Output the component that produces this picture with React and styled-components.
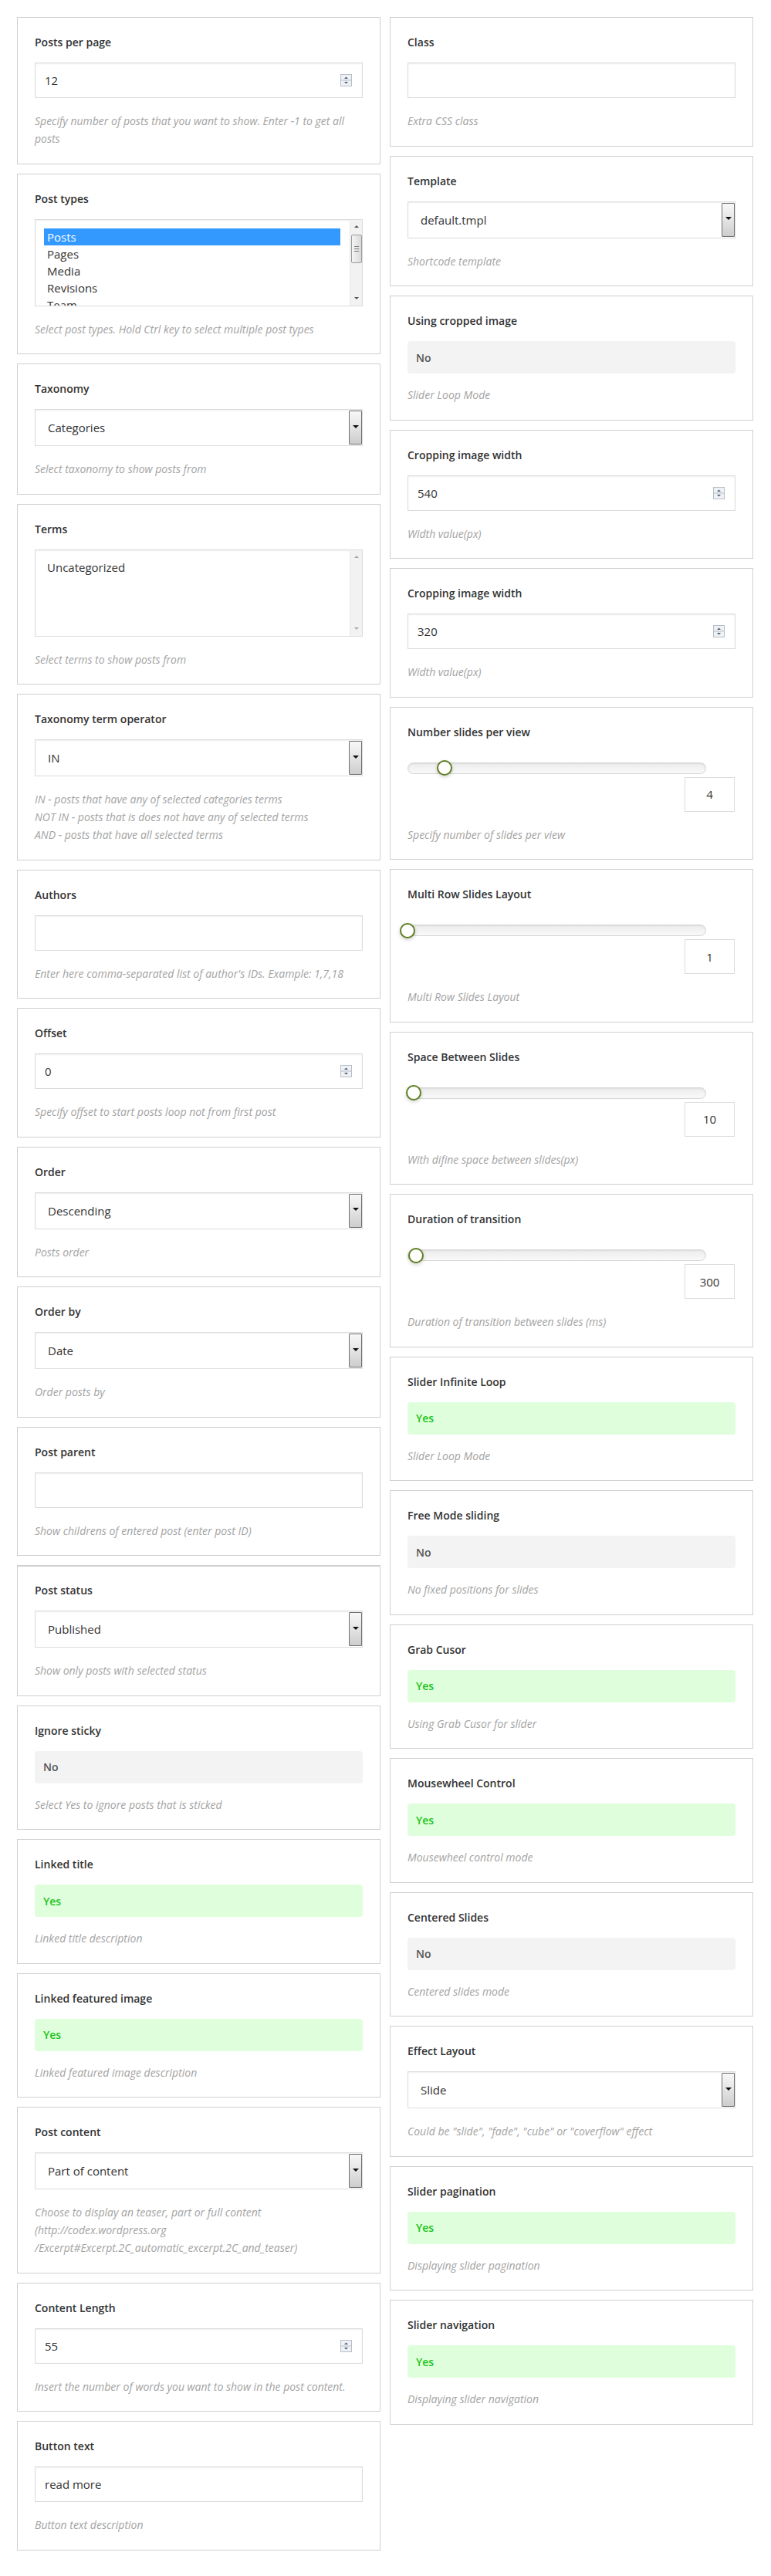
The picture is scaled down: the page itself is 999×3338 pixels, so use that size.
import React from "react";
import styled, { createGlobalStyle } from "styled-components";

const GlobalStyle = createGlobalStyle`
  html, body {
    margin: 0;
    padding: 0;
    background: #ffffff;
  }
  body {
    font-family: "Open Sans", "Liberation Sans", Arial, sans-serif;
    color: #333333;
  }
  * {
    box-sizing: border-box;
  }
`;

// left column settings
const leftFields = [
  {
    label: "Posts per page",
    type: "number",
    value: "12",
    desc: ["Specify number of posts that you want to show. Enter -1 to get all", "posts"],
  },
  {
    label: "Post types",
    type: "list",
    items: ["Posts", "Pages", "Media", "Revisions", "Team"],
    selected: 0,
    thumb: true,
    desc: "Select post types. Hold Ctrl key to select multiple post types",
  },
  { label: "Taxonomy", type: "select", value: "Categories", desc: "Select taxonomy to show posts from" },
  { label: "Terms", type: "list", items: ["Uncategorized"], selected: -1, desc: "Select terms to show posts from" },
  {
    label: "Taxonomy term operator",
    type: "select",
    value: "IN",
    desc: [
      "IN - posts that have any of selected categories terms",
      "NOT IN - posts that is does not have any of selected terms",
      "AND - posts that have all selected terms",
    ],
  },
  { label: "Authors", type: "text", value: "", desc: "Enter here comma-separated list of author's IDs. Example: 1,7,18" },
  { label: "Offset", type: "number", value: "0", desc: "Specify offset to start posts loop not from first post" },
  { label: "Order", type: "select", value: "Descending", desc: "Posts order" },
  { label: "Order by", type: "select", value: "Date", desc: "Order posts by" },
  { label: "Post parent", type: "text", value: "", desc: "Show childrens of entered post (enter post ID)" },
  { label: "Post status", type: "select", value: "Published", desc: "Show only posts with selected status", heavyTop: true },
  { label: "Ignore sticky", type: "toggle", on: false, desc: "Select Yes to ignore posts that is sticked" },
  { label: "Linked title", type: "toggle", on: true, desc: "Linked title description" },
  { label: "Linked featured image", type: "toggle", on: true, desc: "Linked featured image description" },
  {
    label: "Post content",
    type: "select",
    value: "Part of content",
    desc: [
      "Choose to display an teaser, part or full content",
      "(http://codex.wordpress.org",
      "/Excerpt#Excerpt.2C_automatic_excerpt.2C_and_teaser)",
    ],
  },
  { label: "Content Length", type: "number", value: "55", desc: "Insert the number of words you want to show in the post content." },
  { label: "Button text", type: "text", value: "read more", desc: "Button text description" },
];

// right column settings
const rightFields = [
  { label: "Class", type: "text", value: "", desc: "Extra CSS class" },
  { label: "Template", type: "select", value: "default.tmpl", desc: "Shortcode template" },
  { label: "Using cropped image", type: "toggle", on: false, desc: "Slider Loop Mode" },
  { label: "Cropping image width", type: "number", value: "540", desc: "Width value(px)" },
  { label: "Cropping image width", type: "number", value: "320", desc: "Width value(px)" },
  { label: "Number slides per view", type: "slider", value: "4", offset: 47.7, desc: "Specify number of slides per view" },
  { label: "Multi Row Slides Layout", type: "slider", value: "1", offset: 0, desc: "Multi Row Slides Layout" },
  { label: "Space Between Slides", type: "slider", value: "10", offset: 7.7, desc: "With difine space between slides(px)" },
  { label: "Duration of transition", type: "slider", value: "300", offset: 11.3, desc: "Duration of transition between slides (ms)" },
  { label: "Slider Infinite Loop", type: "toggle", on: true, desc: "Slider Loop Mode" },
  { label: "Free Mode sliding", type: "toggle", on: false, desc: "No fixed positions for slides" },
  { label: "Grab Cusor", type: "toggle", on: true, desc: "Using Grab Cusor for slider" },
  { label: "Mousewheel Control", type: "toggle", on: true, desc: "Mousewheel control mode" },
  { label: "Centered Slides", type: "toggle", on: false, desc: "Centered slides mode" },
  { label: "Effect Layout", type: "select", value: "Slide", desc: 'Could be "slide", "fade", "cube" or "coverflow" effect' },
  { label: "Slider pagination", type: "toggle", on: true, desc: "Displaying slider pagination" },
  { label: "Slider navigation", type: "toggle", on: true, desc: "Displaying slider navigation" },
];

function Spinner() {
  return (
    <svg width="15" height="16" viewBox="0 0 15 16">
      <rect x="0.5" y="0.5" width="14" height="15" fill="#eef1f5" stroke="#b9bec6" />
      <line x1="0.5" y1="8" x2="14.5" y2="8" stroke="#b9bec6" />
      <path d="M5 6 L7.5 3.5 L10 6 Z" fill="#4d5c73" />
      <path d="M5 10 L7.5 12.5 L10 10 Z" fill="#4d5c73" />
    </svg>
  );
}

function ListControl({ field }) {
  return (
    <ListBox>
      <Options>
        {field.items.map((item, i) => (
          <Option key={item} $selected={i === field.selected}>
            {item}
          </Option>
        ))}
      </Options>
      <ScrollTrack>
        <ScrollArrow $dir="up" $active={field.thumb} />
        {field.thumb && (
          <ScrollThumb>
            <Grip />
            <Grip />
            <Grip />
          </ScrollThumb>
        )}
        <ScrollSpacer />
        <ScrollArrow $dir="down" $active={field.thumb} />
      </ScrollTrack>
    </ListBox>
  );
}

function Control({ field }) {
  switch (field.type) {
    case "number":
      return (
        <Field>
          <FieldText>{field.value}</FieldText>
          <SpinWrap>
            <Spinner />
          </SpinWrap>
        </Field>
      );
    case "select":
      return (
        <Field $select>
          <FieldText>{field.value}</FieldText>
          <DropButton>
            <Caret />
          </DropButton>
        </Field>
      );
    case "list":
      return <ListControl field={field} />;
    case "toggle":
      return <Toggle $on={field.on}>{field.on ? "Yes" : "No"}</Toggle>;
    case "slider":
      return (
        <SliderArea>
          <Track>
            <Thumb style={{ left: `${field.offset - 1}px` }} />
          </Track>
          <ValueBox>{field.value}</ValueBox>
        </SliderArea>
      );
    default:
      return (
        <Field>
          <FieldText>{field.value}</FieldText>
        </Field>
      );
  }
}

function SettingCard({ field }) {
  const lines = Array.isArray(field.desc) ? field.desc : [field.desc];
  return (
    <Card $heavyTop={field.heavyTop}>
      <Label>{field.label}</Label>
      <Control field={field} />
      <Desc $gap={field.type === "toggle" ? 16 : 18}>
        {lines.map((line, i) => (
          <React.Fragment key={i}>
            {i > 0 && <br />}
            {line}
          </React.Fragment>
        ))}
      </Desc>
    </Card>
  );
}

export default function App() {
  return (
    <>
      <GlobalStyle />
      <Page>
        <Column>
          {leftFields.map((f, i) => (
            <SettingCard key={i} field={f} />
          ))}
        </Column>
        <Column>
          {rightFields.map((f, i) => (
            <SettingCard key={i} field={f} />
          ))}
        </Column>
      </Page>
    </>
  );
}

const Page = styled.div`
  display: grid;
  grid-template-columns: 471px 471px;
  column-gap: 12px;
  align-items: start;
  padding: 22px 23px 22px 22px;
`;

const Column = styled.div`
  display: flex;
  flex-direction: column;
  gap: 12px;
`;

const Card = styled.section`
  border: 1px solid #cfcfcf;
  border-top-width: ${(p) => (p.$heavyTop ? "2px" : "1px")};
  padding: ${(p) => (p.$heavyTop ? "21px" : "22px")} 22px 20.5px;
  background: #ffffff;
`;

const Label = styled.h4`
  margin: 0 0 16px;
  font-size: 14px;
  font-weight: 600;
  line-height: 20px;
  color: #333333;
`;

const Desc = styled.p`
  margin: ${(p) => p.$gap}px 0 0;
  font-size: 14px;
  font-style: italic;
  line-height: 23px;
  color: #a3a3a3;
`;

const Field = styled.div`
  display: flex;
  align-items: center;
  height: ${(p) => (p.$select ? "48px" : "46px")};
  margin-top: 1px;
  padding-left: ${(p) => (p.$select ? "16px" : "12px")};
  border: 1px solid #dcdcdc;
  box-shadow: inset 0 1px 2px rgba(0, 0, 0, 0.07);
  background: #ffffff;
  font-size: 15px;
  color: #333333;
`;

const FieldText = styled.span`
  flex: 1;
  white-space: nowrap;
`;

const SpinWrap = styled.span`
  display: flex;
  margin-right: 13px;
`;

const DropButton = styled.span`
  align-self: stretch;
  width: 17px;
  margin: 1px 0;
  border: 1px solid #6f6f6f;
  border-radius: 1px;
  background: linear-gradient(#f7f7f7, #e6e6e6 45%, #cdcdcd);
  display: flex;
  align-items: center;
  justify-content: center;
`;

const Caret = styled.span`
  width: 0;
  height: 0;
  margin-top: -3px;
  border-left: 4px solid transparent;
  border-right: 4px solid transparent;
  border-top: 4px solid #111111;
`;

const ListBox = styled.div`
  display: flex;
  height: 113px;
  margin-top: 1px;
  border: 1px solid #dcdcdc;
  box-shadow: inset 0 1px 2px rgba(0, 0, 0, 0.07);
  overflow: hidden;
`;

const Options = styled.div`
  flex: 1;
  padding: 11px 12px 0 11px;
  overflow: hidden;
`;

const Option = styled.div`
  height: 22px;
  line-height: 22px;
  padding-left: 4px;
  font-size: 15px;
  white-space: nowrap;
  background: ${(p) => (p.$selected ? "#3399ff" : "transparent")};
  color: ${(p) => (p.$selected ? "#ffffff" : "#333333")};
`;

const ScrollTrack = styled.div`
  width: 16px;
  display: flex;
  flex-direction: column;
  align-items: center;
  background: #f2f2f2;
  border-left: 1px solid #e9e9e9;
`;

const ScrollArrow = styled.span`
  height: 18px;
  width: 100%;
  display: flex;
  align-items: center;
  justify-content: center;

  &::before {
    content: "";
    width: 0;
    height: 0;
    border-left: 3px solid transparent;
    border-right: 3px solid transparent;
    ${(p) => (p.$dir === "up" ? "border-bottom" : "border-top")}: 3px solid
      ${(p) => (p.$active ? "#555555" : "#a8a8a8")};
  }
`;

const ScrollThumb = styled.span`
  width: 14px;
  height: 37px;
  margin-top: 1px;
  border: 1px solid #9a9a9a;
  border-radius: 2px;
  background: linear-gradient(90deg, #f4f4f4, #dadada);
  display: flex;
  flex-direction: column;
  align-items: center;
  justify-content: center;
  gap: 2px;
`;

const Grip = styled.span`
  width: 6px;
  height: 1px;
  background: #7a7a7a;
`;

const ScrollSpacer = styled.span`
  flex: 1;
`;

const Toggle = styled.div`
  height: 42px;
  padding-left: 11px;
  border-radius: 4px;
  display: flex;
  align-items: center;
  font-size: 14px;
  font-weight: 600;
  background: ${(p) => (p.$on ? "#dfffdc" : "#f3f3f3")};
  color: ${(p) => (p.$on ? "#1cc41c" : "#555555")};
`;

const SliderArea = styled.div`
  display: flex;
  flex-direction: column;
  padding-top: 13px;
`;

const Track = styled.div`
  position: relative;
  width: 387px;
  height: 15px;
  border: 1px solid #d6d6d6;
  border-radius: 8px;
  background: linear-gradient(#ececec, #f9f9f9);
  box-shadow: inset 0 1px 2px rgba(0, 0, 0, 0.07);
`;

const Thumb = styled.span`
  position: absolute;
  top: 50%;
  width: 20px;
  height: 20px;
  margin: -10px 0 0 -10px;
  border-radius: 50%;
  border: 2px solid #5f7e21;
  background: #ffffff;
  box-shadow: 0 2px 5px rgba(0, 0, 0, 0.18);
`;

const ValueBox = styled.div`
  align-self: flex-end;
  width: 65px;
  height: 45px;
  margin: 4px 1px 0 0;
  border: 1px solid #dcdcdc;
  display: flex;
  align-items: center;
  justify-content: center;
  font-size: 15px;
  color: #333333;
`;
